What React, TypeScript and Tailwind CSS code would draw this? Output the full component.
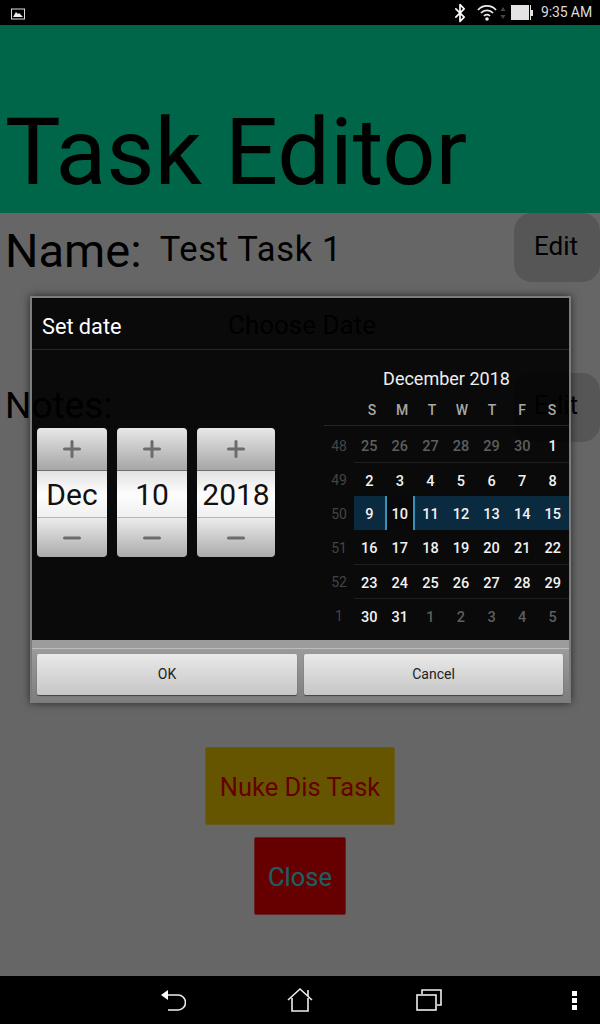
import { Bluetooth } from "lucide-react";

const weeks = [
  { n: 48, days: [25, 26, 27, 28, 29, 30, 1], dimTo: 6, dimFrom: 7 },
  { n: 49, days: [2, 3, 4, 5, 6, 7, 8], dimTo: 0, dimFrom: 7 },
  { n: 50, days: [9, 10, 11, 12, 13, 14, 15], dimTo: 0, dimFrom: 7 },
  { n: 51, days: [16, 17, 18, 19, 20, 21, 22], dimTo: 0, dimFrom: 7 },
  { n: 52, days: [23, 24, 25, 26, 27, 28, 29], dimTo: 0, dimFrom: 7 },
  { n: 1, days: [30, 31, 1, 2, 3, 4, 5], dimTo: 0, dimFrom: 2 },
];

function Spinner({ value, width }: { value: string; width: string }) {
  return (
    <div className={`${width} h-[129px] flex flex-col rounded-[4px] overflow-hidden`}>
      <div className="h-[43px] flex items-center justify-center bg-gradient-to-b from-[#e8e8e8] to-[#a6a6a6] border-b border-[#6e6e6e]">
        <svg width="18" height="18" viewBox="0 0 18 18">
          <path d="M1.5 9h15M9 1.5v15" stroke="#6c6c6c" strokeWidth="3" strokeLinecap="round" />
        </svg>
      </div>
      <div className="h-[47px] flex items-center justify-center pt-[1px] bg-gradient-to-b from-[#e2e2e2] via-[#fdfdfd] to-[#f0f0f0] border-b border-[#b5b5b5] text-[30px] text-[#111]">
        {value}
      </div>
      <div className="flex-1 flex items-center justify-center bg-gradient-to-b from-[#ececec] to-[#ababab]">
        <svg width="18" height="6" viewBox="0 0 18 6">
          <path d="M1.5 3h15" stroke="#6c6c6c" strokeWidth="3" strokeLinecap="round" />
        </svg>
      </div>
    </div>
  );
}

function DialogButton({ label, className }: { label: string; className: string }) {
  return (
    <div className={`${className} h-[41px] flex items-center justify-center rounded-[2px] bg-gradient-to-b from-[#e9e9e9] to-[#c6c6c6] shadow-[0_1px_1px_rgba(0,0,0,0.5)] text-[14px] text-[#222]`}>
      {label}
    </div>
  );
}

export default function App() {
  return (
    <div className="relative w-[600px] h-[1024px] overflow-hidden bg-white text-black font-['Roboto',sans-serif]">
      {/* status bar */}
      <div className="h-[25px] bg-black flex items-center pl-[11px] pr-[8px] text-[#dcdcdc]">
        <svg width="14" height="12" viewBox="0 0 14 12" className="mt-[2px]">
          <rect x="0.5" y="1" width="13" height="10" fill="#000" stroke="#ddd" />
          <path d="M2 9l3-5 2 2 1-1 4 4z" fill="#eee" />
        </svg>
        <div className="ml-auto flex items-center">
          <Bluetooth size={20} strokeWidth={2} className="text-white" />
          <svg width="20" height="17" viewBox="0 0 20 17" className="ml-[7px]">
            <path d="M1 6a12 12 0 0 1 18 0M4 9a8 8 0 0 1 12 0M7 12a4 4 0 0 1 6 0" fill="none" stroke="#eee" strokeWidth="1.8" />
            <circle cx="10" cy="15" r="1.8" fill="#eee" />
          </svg>
          <svg width="6" height="14" viewBox="0 0 6 14" className="ml-[3px]">
            <path d="M3 1l2.5 4h-5zM3 13L.5 9h5z" fill="#444" />
          </svg>
          <div className="ml-[5px] flex items-center">
            <div className="w-[18px] h-[15px] bg-[#e4e4e4]" />
            <div className="w-[1px] h-[15px] bg-black" />
            <div className="w-[1px] h-[15px] bg-[#e4e4e4]" />
            <div className="w-[2px] h-[6px] bg-[#e4e4e4]" />
          </div>
          <span className="ml-[8px] text-[14px] tracking-[-0.1px]">9:35 AM</span>
        </div>
      </div>

      {/* task editor page, dimmed by the overlay below */}
      <div className="h-[188px] bg-[#00ffb8] flex items-end pl-[5px]">
        <span className="text-[93.4px] leading-[106px] mb-[8px]">Task Editor</span>
      </div>
      <div className="relative h-[763px] bg-white">
        <div className="flex items-start">
          <span className="ml-[5px] mt-[11px] text-[47px] leading-[53px]">Name:</span>
          <span className="ml-[18px] mt-[16px] text-[34.5px] leading-[40px] tracking-[0.7px]">Test Task 1</span>
          <div className="ml-auto w-[86px] h-[69px] rounded-[18px] bg-[#d6d6d6] flex items-center justify-center text-[26px] pb-[3px] pr-[2px]">Edit</div>
        </div>
        <div className="flex justify-center mt-[28px] pl-[4px] text-[26px] leading-[30px]">Choose Date</div>
        <div className="flex items-start mt-[33px]">
          <span className="ml-[5px] mt-[10px] text-[37px] leading-[45px]">Notes:</span>
          <div className="ml-auto w-[86px] h-[69px] rounded-[18px] bg-[#d6d6d6] flex items-center justify-center text-[26px] pb-[4px] pr-[2px]">Edit</div>
        </div>
        <div className="flex flex-col items-center mt-[305px]">
          <div className="w-[190px] h-[78px] pt-[2px] rounded-[2px] bg-[#ffd500] border border-[#ffe04d] flex items-center justify-center text-[25.5px] text-[#ff0000]">Nuke Dis Task</div>
          <div className="mt-[12px] w-[92px] h-[78px] pt-[2px] rounded-[2px] bg-[#ff0000] border border-[#ff5a5a] flex items-center justify-center text-[25.5px] text-[#40f0ff]">Close</div>
        </div>
      </div>

      {/* nav bar */}
      <div className="h-[48px] bg-black flex items-center text-white">
        <svg width="26" height="24" viewBox="0 0 26 24" className="ml-[160px]">
          <path d="M4 7h14a6 6 0 0 1 0 15h-10" fill="none" stroke="#eee" strokeWidth="1.6" />
          <path d="M1 7l7-5v10z" fill="#fff" />
        </svg>
        <svg width="28" height="26" viewBox="0 0 28 26" className="ml-[101px]">
          <path d="M1 13L13 2l12 11M5 11v13h16V11M21 3v6" fill="none" stroke="#eee" strokeWidth="1.6" />
        </svg>
        <svg width="28" height="24" viewBox="0 0 28 24" className="ml-[101px]">
          <rect x="1" y="7" width="19" height="15" fill="none" stroke="#eee" strokeWidth="1.6" />
          <path d="M6 6V2h19v15h-4" fill="none" stroke="#eee" strokeWidth="1.6" />
        </svg>
        <div className="ml-[128px] flex flex-col gap-[2px]">
          <div className="w-[5px] h-[5px] bg-white" />
          <div className="w-[5px] h-[5px] bg-white" />
          <div className="w-[5px] h-[5px] bg-white" />
        </div>
      </div>

      {/* scrim over the page content only */}
      <div className="absolute left-0 right-0 top-[25px] h-[951px] bg-black/60" />

      {/* date dialog */}
      <div className="absolute left-[30px] top-[296px] w-[541px] h-[407px] border-2 border-[#7d7d7d] shadow-[0_0_8px_rgba(0,0,0,0.6)] flex flex-col">
        <div className="h-[342px] bg-black/90 text-white">
          <div className="h-[52px] border-b border-[#262626] flex items-center pl-[10px] pt-[8px] text-[21.7px]">Set date</div>
          <div className="flex">
            <div className="w-[292px] pl-[5px] pt-[78px] flex gap-[10px]">
              <Spinner value="Dec" width="w-[70px]" />
              <Spinner value="10" width="w-[70px]" />
              <Spinner value="2018" width="w-[78px]" />
            </div>
            <div className="flex-1 flex flex-col pt-[19px]">
              <div className="h-[20px] flex items-center justify-center text-[18px] leading-none text-[#eee]">December 2018</div>
              <div className="h-[37px] flex items-center border-b border-[#262626] pl-[33px] pt-[7px] text-[14px] font-medium text-[#a8a8a8]">
                {["S", "M", "T", "W", "T", "F", "S"].map((d, i) => (
                  <span key={i} className="w-[30px] text-center">{d}</span>
                ))}
              </div>
              <div className="mt-[2px]">
                {weeks.map((w) => (
                  <div key={w.n} className="h-[34px] flex items-center">
                    <span className="w-[30px] pt-[2px] text-center text-[14px] text-[#444]">{w.n}</span>
                    <div className={`flex-1 h-full grid grid-cols-7 pr-[1px] ${w.n === 50 ? "bg-[#0a2a40]" : ""} ${w.n === 49 || w.n === 52 || w.n === 1 ? "border-t border-[#1f1f1f]" : ""}`}>
                      {w.days.map((d, i) => {
                        const dim = i < w.dimTo || i >= w.dimFrom;
                        const picked = w.n === 50 && i === 1;
                        return (
                          <span
                            key={i}
                            className={`flex items-center justify-center pt-[4px] text-[14.5px] font-medium ${dim ? "text-[#5e5e5e]" : "text-[#f2f2f2]"} ${picked ? "bg-[#090909] border-x-2 border-[#3a91b8]" : ""}`}
                          >
                            {d}
                          </span>
                        );
                      })}
                    </div>
                  </div>
                ))}
              </div>
            </div>
          </div>
        </div>
        <div className="flex-1 bg-gradient-to-b from-[#a0a0a0] to-[#7e7e7e] flex flex-col">
          <div className="h-[9px] border-b border-[#bdbdbd] bg-[#9c9c9c]" />
          <div className="flex-1 flex items-center pl-[5px] pb-[1px]">
            <DialogButton label="OK" className="w-[260px]" />
            <DialogButton label="Cancel" className="w-[259px] ml-[7px]" />
          </div>
        </div>
      </div>
    </div>
  );
}
